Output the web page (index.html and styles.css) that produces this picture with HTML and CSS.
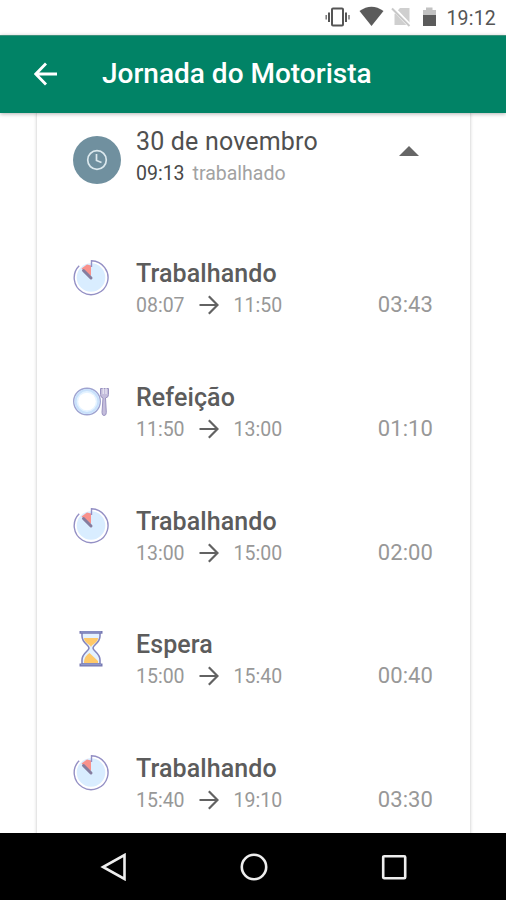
FILE: index.html
```html
<!DOCTYPE html>
<html lang="pt-BR">
<head>
<meta charset="utf-8">
<title>Jornada do Motorista</title>
<link rel="stylesheet" href="styles.css">
</head>
<body>
<svg class="symbols" aria-hidden="true">
  <symbol id="timer" viewBox="0 0 38 38">
    <circle cx="19" cy="19.500" r="14.300" fill="#d9edff"/>
    <path d="M19 18V7.500L15 6.500L9.500 10.500Z" fill="#f9928c"/>
    <path d="M19.500 9V2.800A16.900 16.900 0 1 1 7.200 7.700" fill="none" stroke="#9490c5" stroke-width="1.400"/>
    <path d="M11.500 12.500L19 20" stroke="#857d9f" stroke-width="3" stroke-linecap="round"/>
  </symbol>
  <symbol id="meal" viewBox="0 0 38 38">
    <circle cx="15" cy="19.500" r="13.300" fill="#e5f3ff" stroke="#9fa3d0" stroke-width="1.400"/>
    <circle cx="15" cy="19.500" r="11.400" fill="none" stroke="#c9e1fb" stroke-width="2"/>
    <circle cx="15" cy="19.500" r="8.800" fill="#fff"/>
    <path d="M28.500 6.500V12.500Q28.500 15.500 31 16L30 30.500Q30 33.500 32 33.500Q34.300 33.500 34.300 30.500L33.500 16Q36.500 15.500 36.500 12.500V6.500Z" fill="#c4bddc" stroke="#9a93c0" stroke-width="1"/>
    <path d="M31.200 6V12M34 6V12" stroke="#fff" stroke-width=".8"/>
  </symbol>
  <symbol id="hourglass" viewBox="0 0 38 38">
    <path d="M10 3V7C10 14 17 16 17 19C17 22 10 24 10 31V35H28V31C28 24 21 22 21 19C21 16 28 14 28 7V3Z" fill="#e4f2ff" stroke="#8586bd" stroke-width="1.600"/>
    <path d="M12 9H26C26 14 20 15 19 18C18 15 12 14 12 9Z" fill="#ffc969"/>
    <path d="M12 34C12 28 15 26 17.500 24L26 32V34Z" fill="#ffc969"/>
    <path d="M7.500 3.300H30.500M7.500 36H30.500" stroke="#7779b2" stroke-width="2.800"/>
    <path d="M9 3H29M9 35.700H29" stroke="#9aa8d8" stroke-width=".8"/>
  </symbol>
  <symbol id="arrow" viewBox="0 0 20 20">
    <path d="M0.500 10H18M9.800 1.200L18.500 10L9.800 18.800" fill="none" stroke="#626262" stroke-width="2.200"/>
  </symbol>
</svg>
<div class="screen">
  <div class="status">
    <svg class="status-icons" viewBox="0 0 114 24">
      <g fill="none" stroke="#555" stroke-width="2"><rect x="7" y="4.500" width="11" height="17" rx="1"/><path d="M4 8.500V18M21 8.500V18"/><path d="M1.200 11V15.500M24 11V15.500" stroke="#777" stroke-width="1.500"/></g>
      <path d="M34.500 7Q46.500-1.500 58.500 7L46.500 22Z" fill="#5b5b5b"/>
      <path d="M75 4H84.500V21H69.500V10Z" fill="#cfcfcf"/><path d="M68 4L86 23" stroke="#fff" stroke-width="4"/><path d="M67 4.500L84.500 22" stroke="#c8c8c8" stroke-width="2"/>
      <path d="M98 6H101V3.500H107.500V6H111V11H98Z" fill="#c2c2c2"/><path d="M98 11H111V22H98Z" fill="#5b5b5b"/>
    </svg>
    <span class="clock">19:12</span>
  </div>
  <header class="appbar">
    <svg class="back" viewBox="0 0 24 24"><path d="M23 12H2M12 1.500L1.800 12L12 22.500" fill="none" stroke="#fff" stroke-width="2.800"/></svg>
    <h1 class="heading">Jornada do Motorista</h1>
  </header>
  <main class="content">
    <section class="card">
      <div class="day">
        <div class="badge"><svg class="badge-icon" viewBox="0 0 22 22"><circle cx="11" cy="11" r="9.300"/><path d="M10.500 5V11.500L15.500 13.500"/></svg></div>
        <div class="info">
          <h2 class="date">30 de novembro</h2>
          <div class="worked"><span class="total">09:13</span><span class="label">trabalhado</span></div>
        </div>
        <svg class="caret" viewBox="0 0 20 10"><path d="M0 10L10 0L20 10Z" fill="#666"/></svg>
      </div>
      <div class="entry">
        <svg class="icon"><use href="#timer"/></svg>
        <div class="info"><h3 class="name">Trabalhando</h3><div class="range"><span>08:07</span><svg class="arrow"><use href="#arrow"/></svg><span>11:50</span></div></div>
        <span class="duration">03:43</span>
      </div>
      <div class="entry">
        <svg class="icon"><use href="#meal"/></svg>
        <div class="info"><h3 class="name">Refeição</h3><div class="range"><span>11:50</span><svg class="arrow"><use href="#arrow"/></svg><span>13:00</span></div></div>
        <span class="duration">01:10</span>
      </div>
      <div class="entry">
        <svg class="icon"><use href="#timer"/></svg>
        <div class="info"><h3 class="name">Trabalhando</h3><div class="range"><span>13:00</span><svg class="arrow"><use href="#arrow"/></svg><span>15:00</span></div></div>
        <span class="duration">02:00</span>
      </div>
      <div class="entry">
        <svg class="icon"><use href="#hourglass"/></svg>
        <div class="info"><h3 class="name">Espera</h3><div class="range"><span>15:00</span><svg class="arrow"><use href="#arrow"/></svg><span>15:40</span></div></div>
        <span class="duration">00:40</span>
      </div>
      <div class="entry">
        <svg class="icon"><use href="#timer"/></svg>
        <div class="info"><h3 class="name">Trabalhando</h3><div class="range"><span>15:40</span><svg class="arrow"><use href="#arrow"/></svg><span>19:10</span></div></div>
        <span class="duration">03:30</span>
      </div>
    </section>
  </main>
  <nav class="navbar">
    <svg class="nav-icon" viewBox="0 0 28 28"><path d="M24.500 2V26L3 14Z"/></svg>
    <svg class="nav-icon" viewBox="0 0 28 28"><circle cx="14" cy="14" r="12.200"/></svg>
    <svg class="nav-icon" viewBox="0 0 28 28"><rect x="3.200" y="3.200" width="22" height="22" rx="1"/></svg>
  </nav>
</div>
</body>
</html>
```
FILE: styles.css
```css
* { box-sizing: border-box; }
body { margin: 0; font-family: Roboto, sans-serif; background: #fff; }
h1, h2, h3 { margin: 0; font-weight: 500; }
svg { display: block; flex: none; }
.symbols { display: none; }
.screen { width: 506px; height: 900px; display: flex; flex-direction: column; overflow: hidden; }
.status { height: 35px; flex: none; display: flex; align-items: center; justify-content: flex-end; gap: 7px; padding: 0 10px 0 0; }
.status-icons { width: 114px; height: 24px; margin-bottom: 3px; }
.clock { font-size: 19.500px; line-height: 24px; color: #555; letter-spacing: .2px; margin-top: 2px; }
.appbar { height: 78px; flex: none; display: flex; align-items: center; padding: 0 0 2px 34px; background: #018366; border-top: 1px solid #3d917c; box-shadow: 0 1px 4px rgba(0,0,0,.3); z-index: 1; }
.back { width: 24px; height: 24px; }
.heading { margin-left: 44px; font-size: 28px; line-height: 36px; color: #fff; white-space: nowrap; }
.content { flex: 1; min-height: 0; overflow: hidden; padding: 0 35px 0 36px; }
.card { border: 1px solid #e6e6e6; border-width: 0 1px; box-shadow: 0 0 3px rgba(0,0,0,.13); padding: 0 37px 0 35px; background: #fff; }
.day, .entry { display: flex; align-items: flex-start; }
.day { height: 114px; padding-top: 13px; }
.badge { width: 48px; height: 48px; flex: none; margin: 10px 15px 0 1px; border-radius: 50%; background: #70909f; display: flex; align-items: center; justify-content: center; }
.badge-icon { width: 22px; height: 22px; fill: none; stroke: #dce9ee; stroke-width: 1.700; }
.info { flex: 1; }
.date { font-size: 25px; line-height: 32px; letter-spacing: .18px; font-weight: 400; color: #505050; white-space: nowrap; }
.worked { display: flex; gap: 8px; font-size: 19.500px; line-height: 32px; }
.total { color: #484848; }
.label { color: #a2a2a2; }
.caret { width: 20px; height: 10px; margin: 20px 14px 0 0; }
.entry { height: 123.750px; padding-top: 31px; }
.icon { width: 38px; height: 38px; margin-right: 26px; }
.name { font-size: 25px; line-height: 32px; letter-spacing: .1px; color: #5c5c5c; }
.range { display: flex; align-items: center; font-size: 19.500px; line-height: 32px; color: #989898; }
.arrow { width: 20px; height: 20px; margin: 0 15px 2px 14px; }
.duration { margin-top: 31px; font-size: 22px; line-height: 32px; color: #989898; letter-spacing: .1px; }
.navbar { height: 67px; flex: none; display: flex; align-items: center; justify-content: space-between; padding: 0 98px 0 100px; background: #000; }
.nav-icon { width: 28px; height: 28px; fill: none; stroke: #eee; stroke-width: 2.600; }
```
